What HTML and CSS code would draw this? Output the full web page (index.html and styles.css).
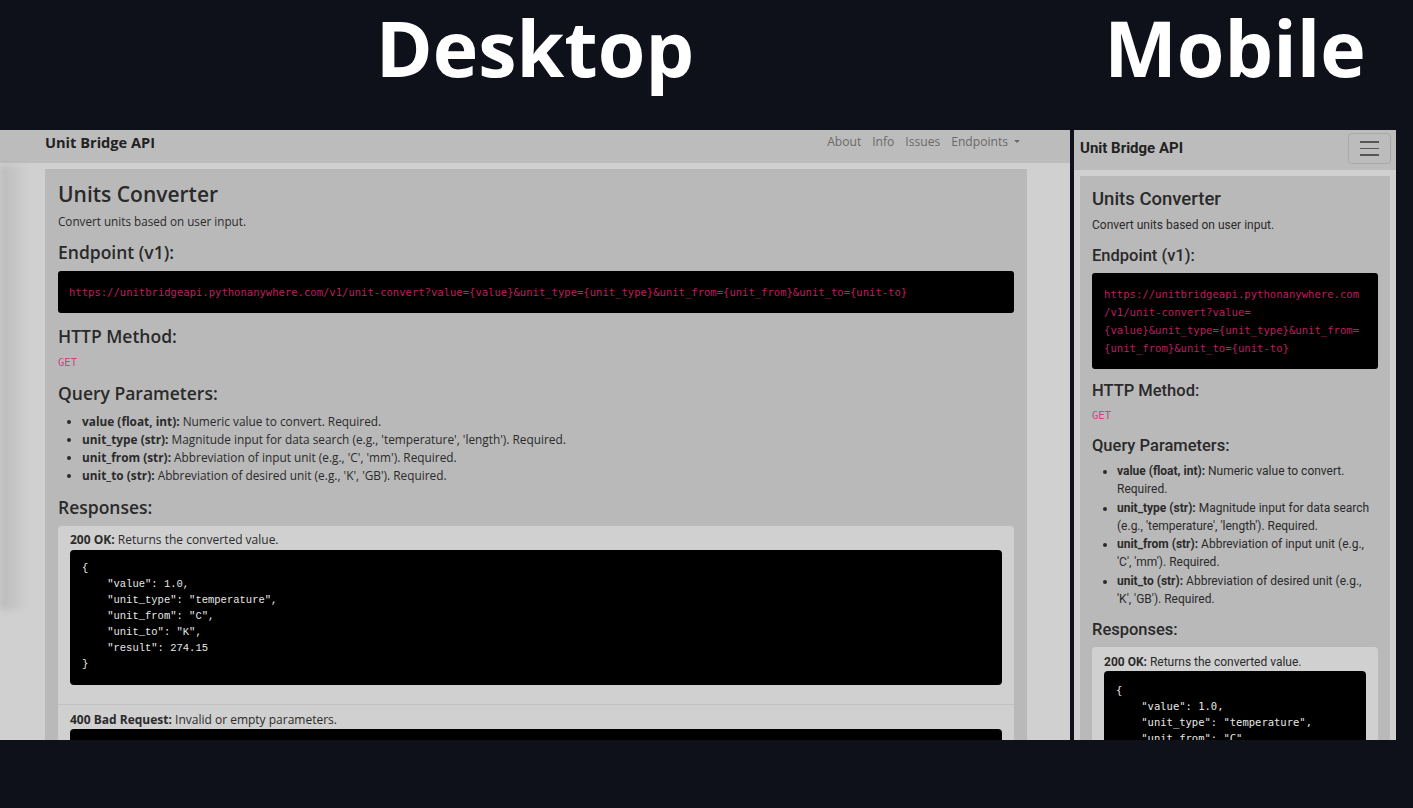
FILE: index.html
```html
<!DOCTYPE html>
<html lang="en">
<head>
<meta charset="utf-8">
<title>Unit Bridge API - Desktop / Mobile</title>
<link rel="stylesheet" href="styles.css">
</head>
<body>
<div class="titles">
  <div class="title desk-title">Desktop</div>
  <div class="title mob-title">Mobile</div>
</div>
<div class="frames">
  <div class="frame desk">
    <nav class="d-nav">
      <div class="d-brand">Unit Bridge API</div>
      <ul class="d-links">
        <li>About</li>
        <li>Info</li>
        <li>Issues</li>
        <li>Endpoints<span class="caret"></span></li>
      </ul>
    </nav>
    <div class="d-body">
      <div class="d-shadow"></div>
      <main class="d-cont">
        <h1 class="d-h1">Units Converter</h1>
        <p class="d-p">Convert units based on user input.</p>
        <h2 class="d-h2">Endpoint (v1):</h2>
        <pre class="d-url">https://unitbridgeapi.pythonanywhere.com/v1/unit-convert?value={value}&amp;unit_type={unit_type}&amp;unit_from={unit_from}&amp;unit_to={unit-to}</pre>
        <h2 class="d-h2">HTTP Method:</h2>
        <code class="d-get">GET</code>
        <h2 class="d-h2">Query Parameters:</h2>
        <ul class="d-list">
          <li><b>value (float, int):</b> Numeric value to convert. Required.</li>
          <li><b>unit_type (str):</b> Magnitude input for data search (e.g., 'temperature', 'length'). Required.</li>
          <li><b>unit_from (str):</b> Abbreviation of input unit (e.g., 'C', 'mm'). Required.</li>
          <li><b>unit_to (str):</b> Abbreviation of desired unit (e.g., 'K', 'GB'). Required.</li>
        </ul>
        <h2 class="d-h2">Responses:</h2>
        <div class="d-card">
          <div class="d-item">
            <div class="d-label"><b>200 OK:</b> Returns the converted value.</div>
            <pre class="d-json">{
    "value": 1.0,
    "unit_type": "temperature",
    "unit_from": "C",
    "unit_to": "K",
    "result": 274.15
}</pre>
          </div>
          <div class="d-item second">
            <div class="d-label"><b>400 Bad Request:</b> Invalid or empty parameters.</div>
            <div class="d-json d-json-stub"></div>
          </div>
        </div>
      </main>
    </div>
  </div>
  <div class="frame mob">
    <nav class="m-nav">
      <div class="m-brand">Unit Bridge API</div>
      <div class="m-burger"><span></span><span></span><span></span></div>
    </nav>
    <div class="m-body">
      <main class="m-cont">
        <h1 class="m-h1">Units Converter</h1>
        <p class="m-p">Convert units based on user input.</p>
        <h2 class="m-h2">Endpoint (v1):</h2>
        <pre class="m-url">https://unitbridgeapi.pythonanywhere.com
/v1/unit-convert?value=
{value}&amp;unit_type={unit_type}&amp;unit_from=
{unit_from}&amp;unit_to={unit-to}</pre>
        <h2 class="m-h2">HTTP Method:</h2>
        <code class="m-get">GET</code>
        <h2 class="m-h2">Query Parameters:</h2>
        <ul class="m-list">
          <li><b>value (float, int):</b> Numeric value to convert. Required.</li>
          <li><b>unit_type (str):</b> Magnitude input for data search (e.g., 'temperature', 'length'). Required.</li>
          <li><b>unit_from (str):</b> Abbreviation of input unit (e.g., 'C', 'mm'). Required.</li>
          <li><b>unit_to (str):</b> Abbreviation of desired unit (e.g., 'K', 'GB'). Required.</li>
        </ul>
        <h2 class="m-h2">Responses:</h2>
        <div class="m-card">
          <div class="m-label"><b>200 OK:</b> Returns the converted value.</div>
          <pre class="m-json">{
    "value": 1.0,
    "unit_type": "temperature",
    "unit_from": "C",
    "unit_to": "K",
    "result": 274.15
}</pre>
        </div>
      </main>
    </div>
  </div>
</div>
</body>
</html>
```
FILE: styles.css
```css
* { box-sizing: border-box; }
html, body { margin: 0; padding: 0; }
body {
  background: #0e1119;
  width: 1413px;
  height: 808px;
  overflow: hidden;
  font-family: "Open Sans", sans-serif;
}
.titles {
  display: flex;
  height: 130px;
}
.title {
  color: #fff;
  font-family: "Open Sans", sans-serif;
  font-weight: 700;
  font-size: 77px;
  line-height: 96px;
  height: 110px;
  text-align: center;
  padding-top: 0;
}
.desk-title { width: 1070px; }
.mob-title { width: 326px; padding-left: 4px; }

.frames {
  display: flex;
  gap: 4px;
  height: 610px;
}
.frame {
  height: 610px;
  overflow: hidden;
  background: #d0d0d0;
}
.desk { width: 1070px; }
.mob { width: 322px; }

/* ---------- desktop ---------- */
.d-nav {
  height: 33px;
  background: #bcbcbc;
  display: flex;
  justify-content: space-between;
  padding: 3px 50px 0 45px;
  width: 1070px;
}
.d-nav > * { line-height: 18px; }
.d-brand {
  font-weight: 700;
  font-size: 14.6px;
  color: #222;
}
.d-links {
  list-style: none;
  margin: 0;
  padding: 0;
  display: flex;
  gap: 11px;
  font-size: 12.1px;
  color: #6a6a6a;
}
.caret {
  display: inline-block;
  vertical-align: middle;
  margin-left: 6px;
  margin-top: -2px;
  border-left: 3px solid transparent;
  border-right: 3px solid transparent;
  border-top: 3.5px solid #6a6a6a;
}
.d-body {
  position: relative;
  padding: 6px 0 0 45px;
}
.d-shadow {
  position: absolute;
  left: 0;
  top: 2px;
  width: 28px;
  height: 445px;
  background: linear-gradient(to right, rgba(0,0,0,0.1), rgba(0,0,0,0));
  filter: blur(3px);
}
.d-cont {
  width: 982px;
  background: #b9b9b9;
  padding: 12px 13px 20px;
  color: #2b2b2b;
  min-height: 600px;
}
.d-h1 {
  margin: 0 0 5px;
  font-size: 21px;
  line-height: 26px;
  font-weight: 600;
  color: #2a2a2a;
}
.d-p {
  margin: 0 0 11px;
  font-size: 11.7px;
  line-height: 18px;
}
.d-h2 {
  margin: 0 0 8px;
  font-size: 17.5px;
  line-height: 22px;
  font-weight: 600;
  color: #2a2a2a;
}
.d-url {
  margin: 0 0 12px;
  background: #000;
  border-radius: 3px;
  height: 42px;
  padding: 14px 11px;
  font-family: "DejaVu Sans Mono", monospace;
  font-size: 10.55px;
  line-height: 14px;
  color: #bb1f5e;
  white-space: pre;
  overflow: hidden;
}
.d-get {
  display: block;
  margin: 3px 0 13px;
  font-family: "DejaVu Sans Mono", monospace;
  font-size: 10.5px;
  line-height: 14px;
  color: #cf4483;
}
.d-list {
  margin: 1px 0 12px;
  padding-left: 24px;
  font-size: 11.85px;
  line-height: 18px;
}
.d-list b { font-weight: 700; }
.d-card {
  background: #d0d0d0;
  border-radius: 4px;
  margin-top: 0;
}
.d-item { padding: 6px 12px 19px; }
.d-item.second {
  border-top: 1px solid #c2c2c2;
  padding-top: 7px;
}
.d-label {
  font-size: 12px;
  line-height: 16px;
  color: #2b2b2b;
  margin-bottom: 2px;
}
.d-item.second .d-label { margin-bottom: 1px; }
.d-json {
  margin: 0;
  background: #000;
  border-radius: 4px;
  padding: 10px 12px 13px;
  font-family: "Liberation Mono", monospace;
  font-size: 10.5px;
  line-height: 16px;
  color: #e6e6e6;
}
.d-json-stub { height: 80px; }

/* ---------- mobile ---------- */
.mob { font-family: Roboto, sans-serif; }
.m-nav {
  height: 40px;
  background: #bcbcbc;
  display: flex;
  justify-content: space-between;
  align-items: flex-start;
  padding: 3px 5px 0 6px;
}
.m-brand {
  font-weight: 700;
  font-size: 15px;
  line-height: 31px;
  color: #222;
}
.m-burger {
  width: 43px;
  height: 31px;
  border: 1px solid rgba(0,0,0,0.1);
  border-radius: 4px;
  display: flex;
  flex-direction: column;
  justify-content: center;
  align-items: center;
  gap: 5px;
}
.m-burger span {
  display: block;
  width: 19px;
  height: 1.5px;
  background: #555;
}
.m-body { padding: 6px 6px 0; }
.m-cont {
  background: #b9b9b9;
  padding: 12px 12px 20px;
  color: #2b2b2b;
  min-height: 600px;
}
.m-h1 {
  margin: 0 0 6px;
  font-size: 18.5px;
  line-height: 22px;
  font-weight: 500;
  color: #2a2a2a;
}
.m-p {
  margin: 0 0 12px;
  font-size: 12px;
  line-height: 18px;
}
.m-h2 {
  margin: 0 0 7px;
  font-size: 16.5px;
  line-height: 20px;
  font-weight: 500;
  color: #2a2a2a;
}
.m-url {
  margin: 0 0 12px;
  background: #000;
  border-radius: 3px;
  padding: 12px 12px;
  font-family: "DejaVu Sans Mono", monospace;
  font-size: 10.6px;
  line-height: 18px;
  color: #bb1f5e;
  white-space: pre;
  overflow: hidden;
}
.m-get {
  display: block;
  margin: 4px 0 14px;
  font-family: "DejaVu Sans Mono", monospace;
  font-size: 10.5px;
  line-height: 14px;
  color: #cf4483;
}
.m-list {
  margin: -1px 0 12px;
  padding-left: 25px;
  font-size: 12px;
  line-height: 18.3px;
}
.m-list b { font-weight: 700; }
.m-card {
  background: #d0d0d0;
  border-radius: 4px;
  padding: 7px 12px 12px;
}
.m-label {
  font-size: 12px;
  line-height: 16px;
  margin-bottom: 1px;
}
.m-json {
  margin: 0;
  background: #000;
  border-radius: 4px;
  padding: 11px 12px 12px;
  font-family: "DejaVu Sans Mono", monospace;
  font-size: 10.5px;
  line-height: 16px;
  color: #e6e6e6;
}
```
